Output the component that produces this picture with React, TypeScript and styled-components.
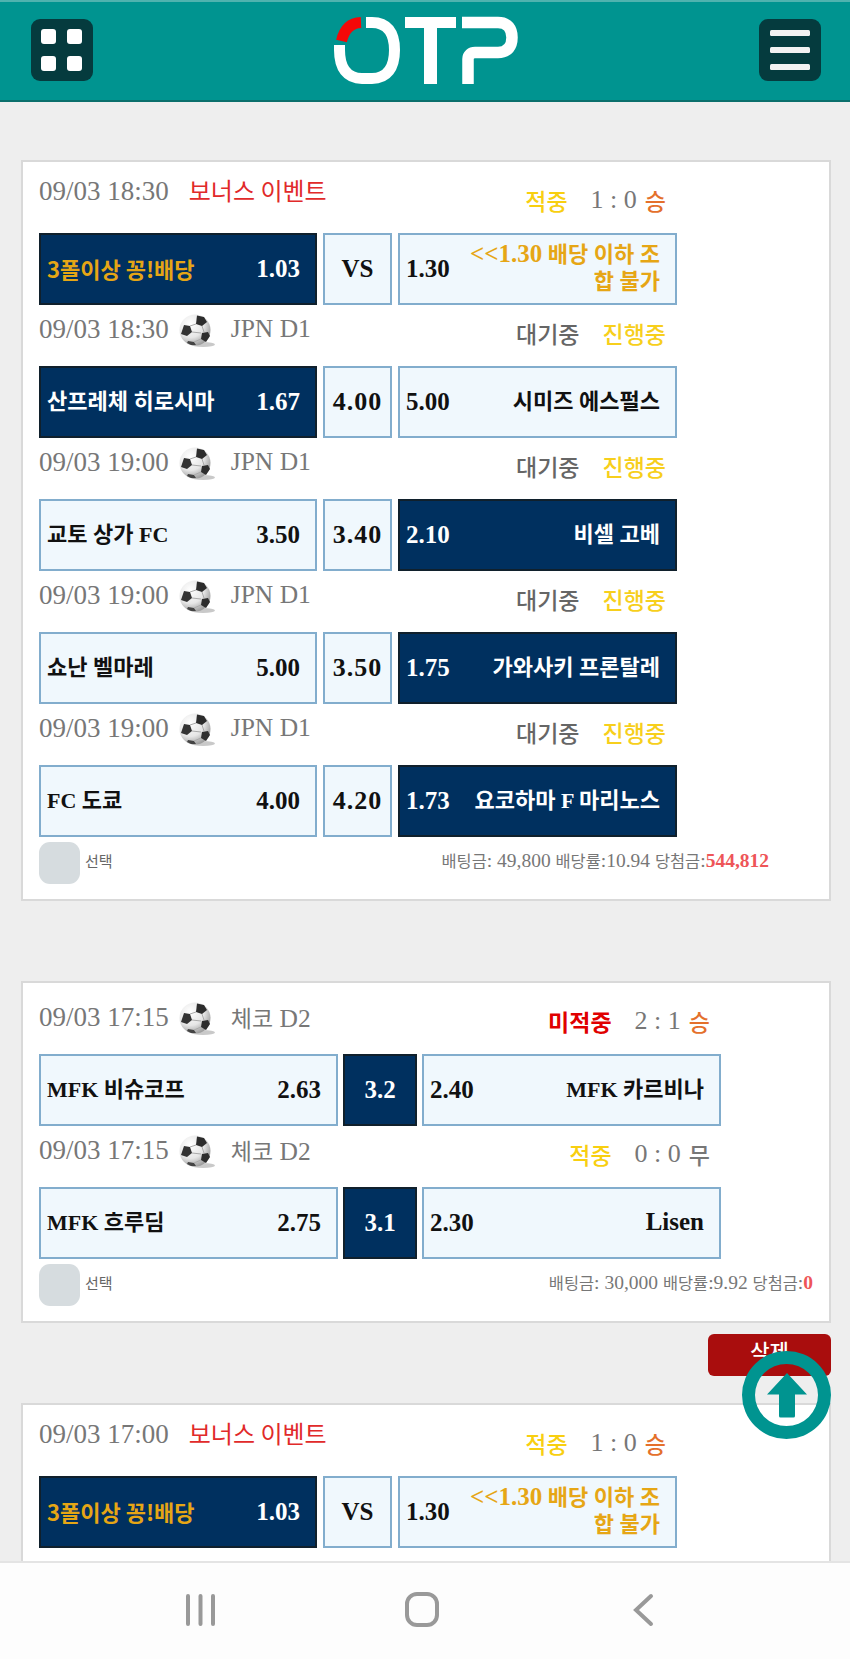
import React from "react";
import styled, { createGlobalStyle } from "styled-components";

const Global = createGlobalStyle`
  html, body { margin: 0; padding: 0; background: #eeeeee; }
  body { font-family: "Liberation Serif", "Noto Sans CJK KR", serif; }
  * { box-sizing: border-box; }
`;

const Page = styled.div`
  position: relative;
  width: 850px;
  height: 1659px;
  overflow: hidden;
  background: #eeeeee;
`;

const Header = styled.header`
  height: 102px;
  background: #009490;
  border-top: 2px solid #4fb3af;
  border-bottom: 2px solid #0a6f6c;
  padding: 17px 29px 0 31px;
  display: flex;
  justify-content: space-between;
  align-items: flex-start;
`;

const IconBox = styled.div`
  width: 62px;
  height: 62px;
  border-radius: 9px;
  background: #053b3e;
  display: flex;
  align-items: center;
  justify-content: center;
`;

const Logo = styled.svg`
  width: 186px;
  height: 70px;
  margin-top: -3px;
  margin-left: 2px;
`;

const Content = styled.main`
  padding: 58px 19px 0 21px;
`;

const Card = styled.section`
  background: #fff;
  border: 2px solid #d9d9d9;
  padding: 10px 16px 15px;
`;

const CardSpacer = styled.div`
  height: 80px;
`;

const DeleteRow = styled.div`
  display: flex;
  justify-content: flex-end;
  padding: 11px 0 27px;
`;

const DeleteButton = styled.button`
  width: 123px;
  height: 42px;
  border: 0;
  border-radius: 6px;
  background: #a90d0d;
  color: #fff;
  font-family: "Noto Sans CJK KR", sans-serif;
  font-size: 21px;
  font-weight: 500;
  line-height: 32px;
  padding: 0 0 10px;
`;

const Meta = styled.div<{ $wide: boolean }>`
  width: ${(p) => (p.$wide ? 682 : 638)}px;
  height: 61px;
  display: flex;
  justify-content: space-between;
  align-items: flex-end;
`;

const MetaLeft = styled.div<{ $bonus: boolean }>`
  display: flex;
  align-items: center;
  height: 34px;
  margin-bottom: ${(p) => (p.$bonus ? 25 : 20)}px;
`;

const DateText = styled.span`
  font-size: 27px;
  color: #777;
  white-space: nowrap;
`;

const BonusText = styled.span`
  font-family: "Noto Sans CJK KR", sans-serif;
  font-size: 24px;
  color: #e12a2a;
  margin-left: 20px;
  line-height: 34px;
  margin-top: -3px;
`;

const League = styled.span`
  font-size: 25.5px;
  color: #777;
  margin-left: 15px;
  white-space: nowrap;
  margin-top: -1px;
`;

const LeagueKo = styled.span`
  font-size: 23px;
`;

const BallIcon = styled.svg`
  width: 38px;
  height: 34px;
  margin-left: 9px;
  margin-top: 4px;
  flex: none;
`;

const MetaRight = styled.div`
  display: flex;
  align-items: center;
  height: 34px;
  margin-bottom: 16px;
  padding-right: 11px;
  white-space: nowrap;
`;

const Status = styled.span<{ $color: string; $strong?: boolean }>`
  font-family: "Noto Sans CJK KR", sans-serif;
  font-size: 23px;
  font-weight: ${(p) => (p.$strong ? 700 : 500)};
  color: ${(p) => p.$color};
`;

const Score = styled.span`
  font-size: 26px;
  color: #777;
  margin-left: 23px;
  margin-right: 8px;
`;

const SecondStatus = styled(Status)`
  margin-left: 23px;
`;

const Grid = styled.div<{ $wide: boolean }>`
  display: grid;
  width: ${(p) => (p.$wide ? 682 : 638)}px;
  height: 72px;
  grid-template-columns: ${(p) => (p.$wide ? "299px 74px 299px" : "278px 69px 279px")};
  column-gap: ${(p) => (p.$wide ? 5 : 6)}px;
`;

const Cell = styled.div<{ $on?: boolean }>`
  display: flex;
  align-items: center;
  justify-content: space-between;
  background: ${(p) => (p.$on ? "#00305f" : "#f0f8fd")};
  border: 2px solid ${(p) => (p.$on ? "#10202c" : "#82adcd")};
  color: ${(p) => (p.$on ? "#fff" : "#111")};
  padding: 0 15px 0 6px;
`;

const MidCell = styled(Cell)`
  justify-content: center;
  padding: 0;
`;

const Name = styled.span<{ $gold?: boolean; $right?: boolean }>`
  font-size: 22px;
  font-weight: 700;
  line-height: 27px;
  color: ${(p) => (p.$gold ? "#e6a615" : "inherit")};
  text-align: ${(p) => (p.$right ? "right" : "left")};
  max-width: 196px;
  margin-top: -2px;
`;

const GoldHome = styled(Name)`
  font-family: "Noto Sans CJK KR", sans-serif;
  font-weight: 600;
`;

const BigLatin = styled.span`
  font-size: 25px;
  line-height: 1;
`;

const Odd = styled.span`
  font-size: 25px;
  font-weight: 700;
  flex: none;
`;

const WideOdd = styled(Odd)`
  font-size: 26px;
  letter-spacing: 1px;
`;

const Footer = styled.div<{ $wide: boolean }>`
  display: flex;
  align-items: center;
  justify-content: space-between;
  margin-top: 5px;
  height: 42px;
  padding-right: ${(p) => (p.$wide ? 0 : 44)}px;
`;

const Select = styled.label`
  display: flex;
  align-items: center;
  gap: 5px;
  font-family: "Noto Sans CJK KR", sans-serif;
  font-size: 15px;
  color: #666;
`;

const SelectText = styled.span`
  margin-top: -6px;
`;

const CheckBox = styled.span`
  width: 41px;
  height: 42px;
  border-radius: 11px;
  background: #d6dcdf;
`;

const Summary = styled.span`
  font-size: 19.5px;
  color: #777;
  white-space: nowrap;
  margin-top: -6px;
`;

const SummaryKo = styled.span`
  font-size: 16.4px;
`;

const Win = styled.b`
  color: #ee5558;
`;

const TopCircle = styled.div`
  position: absolute;
  left: 742px;
  top: 1351px;
  width: 89px;
  height: 88px;
  border: 13px solid #009490;
  border-radius: 50%;
  display: flex;
  align-items: center;
  justify-content: center;
`;

const NavBar = styled.nav`
  position: absolute;
  left: 0;
  right: 0;
  top: 1561px;
  bottom: 0;
  background: #fdfdfd;
  border-top: 2px solid #e4e4e4;
`;

const NavIcon = styled.svg`
  position: absolute;
  left: 0;
  top: 0;
  width: 850px;
  height: 98px;
`;

const Ball = () => (
  <BallIcon viewBox="0 0 38 34" aria-hidden="true">
    <defs>
      <radialGradient id="ballGrad" cx="0.35" cy="0.3" r="0.8">
        <stop offset="0" stopColor="#ffffff" />
        <stop offset="0.55" stopColor="#e6e6e6" />
        <stop offset="1" stopColor="#8c8c8c" />
      </radialGradient>
    </defs>
    <ellipse cx="25" cy="30.5" rx="12" ry="2.5" fill="#c9c9c9" />
    <circle cx="17" cy="16" r="15.5" fill="url(#ballGrad)" />
    <path d="M19 1.5l7 1.5 3 5-5 4-6-2z" fill="#2c2c2c" />
    <path d="M6 11l6 1 2 6-5 4-6-2z" fill="#333" />
    <path d="M24 19l6-1 2 4-4 6-5-3z" fill="#2e2e2e" />
    <path d="M10 27l6 1 2 3-5 0-4-2z" fill="#444" />
    <path d="M12 12l6-2M24 12l2 6M14 18l9 1M16 28l7-3" stroke="#aaa" strokeWidth="1" fill="none" />
  </BallIcon>
);

type Game = {
  time: string;
  league?: React.ReactNode;
  bonus?: boolean;
  home: React.ReactNode;
  homeOdd: string;
  draw: string;
  awayOdd: string;
  away: React.ReactNode;
  pick: "home" | "draw" | "away";
  status: "wait" | "hit" | "miss";
  score?: string;
  result?: string;
};

const bonusGame = (time: string): Game => ({
  time,
  bonus: true,
  home: "3폴이상 꽁!배당",
  homeOdd: "1.03",
  draw: "VS",
  awayOdd: "1.30",
  away: (
    <>
      <BigLatin>&lt;&lt;1.30</BigLatin> 배당 이하 조합 불가
    </>
  ),
  pick: "home",
  status: "hit",
  score: "1 : 0",
  result: "승",
});

const GameRow = ({ g, wide }: { g: Game; wide: boolean }) => {
  const Mid = wide || g.draw === "VS" ? Odd : WideOdd;
  return (
    <>
      <Meta $wide={wide}>
        <MetaLeft $bonus={!!g.bonus}>
          <DateText>{g.time}</DateText>
          {g.bonus ? (
            <BonusText>보너스 이벤트</BonusText>
          ) : (
            <>
              <Ball />
              <League>{g.league}</League>
            </>
          )}
        </MetaLeft>
        {g.status === "wait" ? (
          <MetaRight>
            <Status $color="#666">대기중</Status>
            <SecondStatus $color="#f7cf1c">진행중</SecondStatus>
          </MetaRight>
        ) : (
          <MetaRight>
            {g.status === "hit" ? (
              <Status $color="#f8cf10">적중</Status>
            ) : (
              <Status $color="#e00000" $strong>미적중</Status>
            )}
            <Score>{g.score}</Score>
            <Status $color={g.result === "무" ? "#777" : "#e4702c"}>{g.result}</Status>
          </MetaRight>
        )}
      </Meta>
      <Grid $wide={wide}>
        <Cell $on={g.pick === "home"}>
          {g.bonus ? <GoldHome $gold>{g.home}</GoldHome> : <Name>{g.home}</Name>}
          <Odd>{g.homeOdd}</Odd>
        </Cell>
        <MidCell $on={g.pick === "draw"}>
          <Mid>{g.draw}</Mid>
        </MidCell>
        <Cell $on={g.pick === "away"}>
          <Odd>{g.awayOdd}</Odd>
          <Name $gold={g.bonus} $right>{g.away}</Name>
        </Cell>
      </Grid>
    </>
  );
};

const czech = (
  <>
    <LeagueKo>체코</LeagueKo> D2
  </>
);

const first: Game[] = [
  bonusGame("09/03 18:30"),
  { time: "09/03 18:30", league: "JPN D1", home: "산프레체 히로시마", homeOdd: "1.67", draw: "4.00", awayOdd: "5.00", away: "시미즈 에스펄스", pick: "home", status: "wait" },
  { time: "09/03 19:00", league: "JPN D1", home: "교토 상가 FC", homeOdd: "3.50", draw: "3.40", awayOdd: "2.10", away: "비셀 고베", pick: "away", status: "wait" },
  { time: "09/03 19:00", league: "JPN D1", home: "쇼난 벨마레", homeOdd: "5.00", draw: "3.50", awayOdd: "1.75", away: "가와사키 프론탈레", pick: "away", status: "wait" },
  { time: "09/03 19:00", league: "JPN D1", home: "FC 도쿄", homeOdd: "4.00", draw: "4.20", awayOdd: "1.73", away: "요코하마 F 마리노스", pick: "away", status: "wait" },
];

const second: Game[] = [
  { time: "09/03 17:15", league: czech, home: "MFK 비슈코프", homeOdd: "2.63", draw: "3.2", awayOdd: "2.40", away: "MFK 카르비나", pick: "draw", status: "miss", score: "2 : 1", result: "승" },
  { time: "09/03 17:15", league: czech, home: "MFK 흐루딤", homeOdd: "2.75", draw: "3.1", awayOdd: "2.30", away: <BigLatin>Lisen</BigLatin>, pick: "draw", status: "hit", score: "0 : 0", result: "무" },
];

const BetFooter = ({ wide, stake, rate, win }: { wide: boolean; stake: string; rate: string; win: string }) => (
  <Footer $wide={wide}>
    <Select>
      <CheckBox />
      <SelectText>선택</SelectText>
    </Select>
    <Summary>
      <SummaryKo>배팅금</SummaryKo>: {stake} <SummaryKo>배당률</SummaryKo>:{rate} <SummaryKo>당첨금</SummaryKo>:
      <Win>{win}</Win>
    </Summary>
  </Footer>
);

export default function App() {
  return (
    <Page>
      <Global />
      <Header>
        <IconBox>
          <svg width="42" height="42" viewBox="0 0 42 42" aria-hidden="true">
            <rect x="0" y="0" width="15" height="15" rx="3" fill="#fff" />
            <rect x="26" y="0" width="15" height="15" rx="3" fill="#fff" />
            <rect x="0" y="27" width="15" height="15" rx="3" fill="#fff" />
            <rect x="26" y="27" width="15" height="15" rx="3" fill="#fff" />
          </svg>
        </IconBox>
        <Logo viewBox="333 16 186 70" role="img" aria-label="OTP">
          <path
            d="M365 22.500H371C386 22.500 393.500 32 393.500 50C393.500 68 386 78.500 371 78.500H361C346 78.500 338.500 68 338.500 50V45"
            fill="none"
            stroke="#fff"
            strokeWidth="11"
          />
          <path d="M360 22.500C349 23 343 30 340.500 41" fill="none" stroke="#f40808" strokeWidth="11" />
          <path d="M404 17H455V28H436V84H423V28H404Z" fill="#fff" />
          <path
            d="M461 22.500H497C507 22.500 511 29 511 37.500C511 46 507 52.500 497 52.500H474C470 52.500 467 55 467 59V84"
            fill="none"
            stroke="#fff"
            strokeWidth="11.500"
          />
        </Logo>
        <IconBox>
          <svg width="40" height="40" viewBox="0 0 40 40" aria-hidden="true">
            <rect x="0" y="0" width="40" height="6" rx="1.500" fill="#f2f2f2" />
            <rect x="0" y="17" width="40" height="6" rx="1.500" fill="#f2f2f2" />
            <rect x="0" y="34" width="40" height="6" rx="1.500" fill="#f2f2f2" />
          </svg>
        </IconBox>
      </Header>
      <Content>
        <Card>
          {first.map((g, i) => (
            <GameRow key={i} g={g} wide={false} />
          ))}
          <BetFooter wide={false} stake="49,800" rate="10.94" win="544,812" />
        </Card>
        <CardSpacer />
        <Card>
          {second.map((g, i) => (
            <GameRow key={i} g={g} wide />
          ))}
          <BetFooter wide stake="30,000" rate="9.92" win="0" />
        </Card>
        <DeleteRow>
          <DeleteButton>삭제</DeleteButton>
        </DeleteRow>
        <Card>
          <GameRow g={bonusGame("09/03 17:00")} wide={false} />
        </Card>
      </Content>
      <TopCircle>
        <svg width="42" height="46" viewBox="0 0 42 46" aria-hidden="true">
          <path d="M21 1L41 22.500H29V44a1.500 1.500 0 0 1-1.500 1.500H14.500A1.500 1.500 0 0 1 13 44V22.500H1Z" fill="#009490" />
        </svg>
      </TopCircle>
      <NavBar>
        <NavIcon viewBox="0 0 850 98" aria-hidden="true">
          <g fill="none" stroke="#999" strokeWidth="4" strokeLinecap="round">
            <path d="M188 33V61M200.500 33V61M213 33V61" />
            <rect x="407" y="31" width="30" height="31" rx="10" />
            <path d="M651 33L636 47L651 61" />
          </g>
        </NavIcon>
      </NavBar>
    </Page>
  );
}
